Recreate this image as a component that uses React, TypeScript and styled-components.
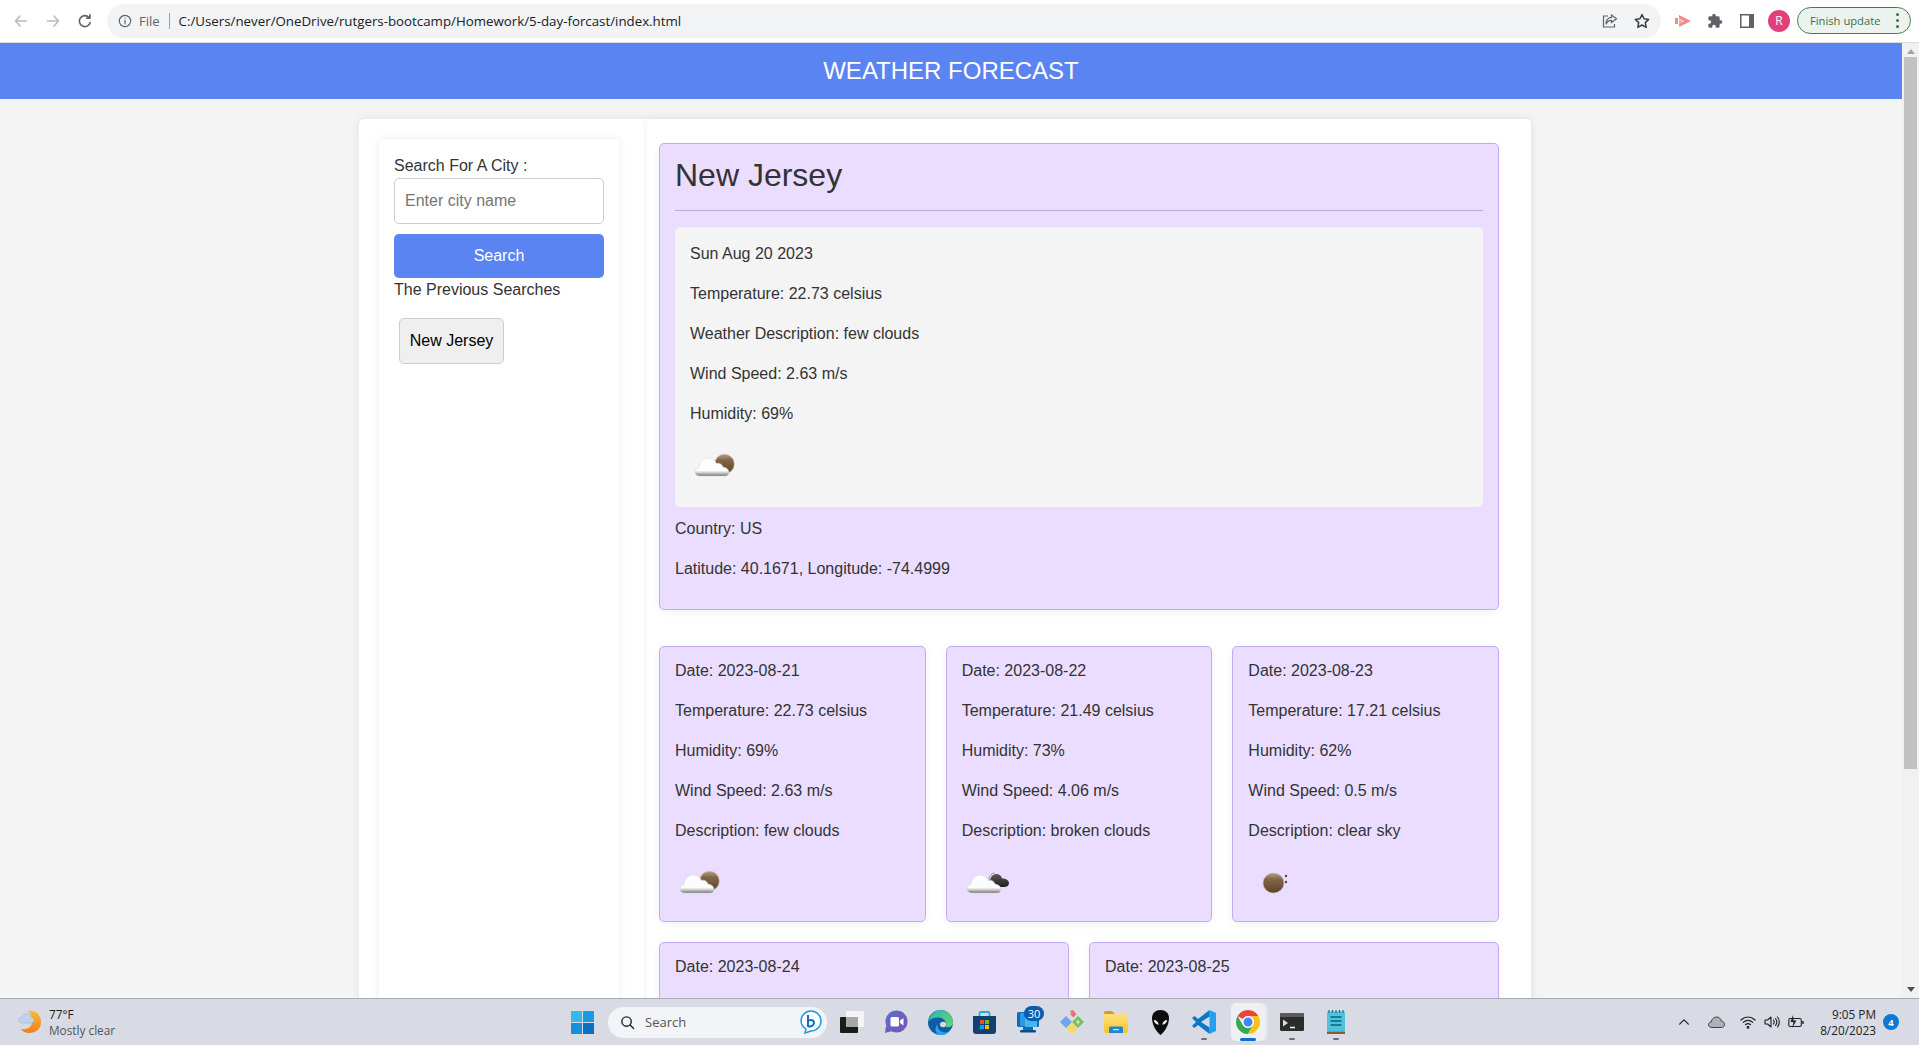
import React from "react";
import styled, { createGlobalStyle } from "styled-components";

const Global = createGlobalStyle`
  html, body { margin: 0; padding: 0; height: 100%; overflow: hidden; }
  body { font-family: "Liberation Sans", Arial, sans-serif; color: #333; }
  * { box-sizing: border-box; }
`;

const Shell = styled.div`display: flex; flex-direction: column; height: 100vh; overflow: hidden; background: #f4f4f4;`;

const Toolbar = styled.div`display: flex; align-items: center; height: 43px; flex: none; background: #fff; padding: 0 8px 1px 5px; border-bottom: 1px solid #dadce0;`;
const NavSlot = styled.div`width: 32px; height: 32px; display: flex; align-items: center; justify-content: center; flex: none;`;
const Omnibox = styled.div`flex: 1; margin-left: 6px; height: 34px; border-radius: 17px; background: #f1f3f4; display: flex; align-items: center; padding: 0 3px 0 11px; font-family: "Open Sans", sans-serif;`;
const FileLabel = styled.span`color: #5f6368; margin-left: 7px; font-size: 13px; padding-right: 9px; border-right: 1px solid #9aa0a6; line-height: 16px;`;
const Url = styled.span`color: #202124; margin-left: 9px; font-size: 13.3px; flex: 1; white-space: nowrap;`;
const ExtGroup = styled.div`display: flex; margin-left: 6px; flex: none;`;
const Avatar = styled.div`width: 22px; height: 22px; border-radius: 50%; background: #e0417c; color: #fff; font: 12px "Open Sans", sans-serif; display: flex; align-items: center; justify-content: center;`;
const UpdatePill = styled.div`margin-left: 2px; width: 114px; height: 27px; flex: none; border-radius: 14px; border: 1px solid #3d7f4a; background: #ecf3ee; display: flex; align-items: center; justify-content: space-between; padding: 0 11px 0 12px; color: #3c6e47; font: 11.2px "Open Sans", sans-serif;`;
const Dots = styled.div`display: flex; flex-direction: column; gap: 3px; span { width: 3px; height: 3px; border-radius: 50%; background: #2b7a3d; display: block; }`;

const Viewport = styled.div`flex: 1; min-height: 0; display: flex;`;
const Page = styled.div`flex: 1; min-width: 0; overflow: hidden; display: flex; flex-direction: column;`;
const Banner = styled.header`height: 56px; flex: none; background: #5a84f2; color: #fff; font-size: 24px; display: flex; align-items: center; justify-content: center;`;
const Container = styled.div`margin: 20px 0 0 359px; width: 1172px; display: flex; background: #fff; border-radius: 5px; box-shadow: 0 0 10px rgba(0,0,0,.07); flex: 1;`;
const Aside = styled.aside`width: 288px; flex: none; padding: 20px 28px 0 20px; display: flex;`;
const SideCard = styled.div`width: 240px; padding: 15px; background: #fff; border-radius: 5px; box-shadow: 0 0 10px rgba(0,0,0,.08); min-height: 900px; font-size: 16px;`;
const SideLabel = styled.div`line-height: 24px; height: 24px;`;
const CityInput = styled.input`display: block; width: 210px; height: 46px; border: 1px solid #ccc; border-radius: 5px; padding: 0 10px; font: 16px "Liberation Sans", Arial, sans-serif; color: #333; &::placeholder { color: #757575; opacity: 1; }`;
const SearchBtn = styled.button`display: block; width: 210px; height: 44px; margin-top: 10px; background: #5a84f2; color: #fff; border: none; border-radius: 5px; font: 16px "Liberation Sans", Arial, sans-serif;`;
const PrevTitle = styled.div`line-height: 24px; height: 22px;`;
const HistoryBtn = styled.button`display: block; margin: 18px 0 0 5px; width: 105px; height: 46px; background: #efefef; color: #000; border: 1px solid #ccc; border-radius: 5px; font: 16px "Liberation Sans", Arial, sans-serif;`;

const Main = styled.main`flex: 1; padding: 24px 32px 0 12px; background: #fff; border-radius: 5px; box-shadow: -2px 0 10px rgba(0,0,0,.05);`;
const CurrentCard = styled.section`height: 467px; background: #eaddff; border: 1px solid #c3a9f2; border-radius: 5px; padding: 0 15px; box-shadow: 0 2px 8px rgba(0,0,0,.06);`;
const CityTitle = styled.h2`margin: 0; font-size: 32px; font-weight: 400; height: 67px; line-height: 62px; border-bottom: 1px solid #b9a8d6;`;
const TodayBox = styled.div`margin-top: 16px; height: 280px; background: #f4f4f4; border-radius: 5px; padding: 15px;`;
const Line = styled.p`margin: 0 0 16px; font-size: 16px; line-height: 24px; white-space: nowrap;`;
const Facts = styled.div`padding-top: 10px;`;
const Forecast = styled.div`display: flex; flex-wrap: wrap; gap: 20px; margin-top: 36px;`;
const DayCard = styled.article`flex: 1 1 260px; height: 276px; background: #eaddff; border: 1px solid #c3a9f2; border-radius: 5px; padding: 12px 15px; box-shadow: 0 2px 8px rgba(0,0,0,.06);`;
const IconSpot = styled.div`width: 50px; height: 50px; margin-top: -2px;`;

const ScrollBar = styled.div`width: 17px; flex: none; background: #f1f1f1; display: flex; flex-direction: column; align-items: center; justify-content: space-between; padding: 6px 0;`;
const Thumb = styled.div`width: 13px; height: 712px; background: #c1c1c1; margin-top: 3px; margin-bottom: auto;`;
const Caret = styled.div<{ $down?: boolean }>`width: 0; height: 0; border-left: 4.5px solid transparent; border-right: 4.5px solid transparent; ${p => p.$down ? "border-top: 5px solid #505050;" : "border-bottom: 5px solid #a3a3a3;"}`;

const Taskbar = styled.footer`height: 47px; flex: none; background: #d8dbe4; border-top: 1px solid #a9acb3; display: flex; align-items: center; font-family: "Open Sans", sans-serif;`;
const WeatherWidget = styled.div`width: 560px; flex: none; padding-left: 18px; display: flex; align-items: center; gap: 7px; font-size: 11.8px; line-height: 16px;`;
const Muted = styled.div`color: #555;`;
const Strong = styled.div`color: #1a1a1a;`;
const StartSlot = styled.div`width: 44px; flex: none; display: flex; justify-content: center;`;
const SearchPill = styled.div`width: 219px; height: 31px; margin: 0 3px 0 4px; flex: none; border-radius: 16px; background: #f3f4f8; display: flex; align-items: center; padding: 0 5px 0 12px; font-size: 13px; color: #555; gap: 10px; span { flex: 1; }`;
const AppSlot = styled.div<{ $active?: boolean }>`
  width: 44px; height: 38px; flex: none; position: relative; display: flex; align-items: center; justify-content: center;
  ${p => p.$active ? `
    &::before { content: ""; position: absolute; left: 5px; top: 0; width: 34px; height: 38px; border-radius: 5px; background: #eff0f4; box-shadow: 3px 0 0 -0.5px #e6e8ee; }
  ` : ""}
  svg { position: relative; }
`;
const RunDot = styled.i<{ $active?: boolean }>`position: absolute; bottom: ${p => p.$active ? "0" : "1px"}; left: 50%; transform: translateX(-50%); height: ${p => p.$active ? "3px" : "2px"}; border-radius: 2px; width: ${p => p.$active ? "16px" : "6px"}; background: ${p => p.$active ? "#0b6fd1" : "#6c6f76"};`;
const CountBadge = styled.b`position: absolute; top: 3px; left: 18px; width: 20px; height: 15px; border-radius: 8px; background: #0a5cb0; color: #fff; font-weight: 400; font-size: 11px; line-height: 15px; text-align: center;`;
const Tray = styled.div`margin-left: auto; display: flex; align-items: center; padding-right: 20px;`;
const TraySlot = styled.div<{ $w: number }>`width: ${p => p.$w}px; display: flex; justify-content: center;`;
const Clock = styled.div`text-align: right; font-size: 11.8px; line-height: 16px; color: #222; width: 64px;`;
const NotifyBadge = styled.div`width: 16px; height: 16px; margin-left: 7px; border-radius: 50%; background: #0a78d4; color: #fff; font-size: 9.5px; font-weight: 700; display: flex; align-items: center; justify-content: center;`;

const Stroke = ({ size = 16, color = "#5f6368", w = 1.6, children }: { size?: number; color?: string; w?: number; children: React.ReactNode }) => (
  <svg width={size} height={size} viewBox="0 0 16 16" fill="none" stroke={color} strokeWidth={w} strokeLinecap="round" strokeLinejoin="round">{children}</svg>
);

const Defs = () => (
  <svg width="0" height="0" style={{ position: "absolute" }}>
    <defs>
      <linearGradient id="cloudG" x1="0" y1="0" x2="0" y2="1">
        <stop offset="0" stopColor="#fff" /><stop offset=".7" stopColor="#fcfcfc" /><stop offset=".84" stopColor="#c4c4c4" /><stop offset="1" stopColor="#6e6e6e" />
      </linearGradient>
      <linearGradient id="sunG" x1="0" y1="0" x2="0" y2="1">
        <stop offset="0" stopColor="#b5a08a" /><stop offset=".3" stopColor="#84674a" /><stop offset="1" stopColor="#5e432b" />
      </linearGradient>
      <linearGradient id="darkG" x1="0" y1="0" x2="0" y2="1">
        <stop offset="0" stopColor="#5a5a5a" /><stop offset="1" stopColor="#1f1f1f" />
      </linearGradient>
      <linearGradient id="moonG" x1="0" y1="0" x2="0" y2="1">
        <stop offset="0" stopColor="#f9b93a" /><stop offset="1" stopColor="#ee7f1c" />
      </linearGradient>
      <linearGradient id="edgeG" x1="0" y1="0" x2="1" y2="1">
        <stop offset="0" stopColor="#2fb5b8" /><stop offset="1" stopColor="#66d86a" />
      </linearGradient>
      <linearGradient id="meetG" x1="0" y1="0" x2="1" y2="1">
        <stop offset="0" stopColor="#5b6fd0" /><stop offset="1" stopColor="#7a52b5" />
      </linearGradient>
      <linearGradient id="folderG" x1="0" y1="0" x2="0" y2="1">
        <stop offset="0" stopColor="#fde07a" /><stop offset="1" stopColor="#f8c330" />
      </linearGradient>
    </defs>
  </svg>
);

const CloudShape = () => (
  <path d="M10 36C7 36 5 34.5 5 32C5 29.5 6.5 28 9 27.5C9.5 22 13 18 18 18C22 18 25 20 26.5 23.5C29 22.5 32 24 33 27C36.5 27.5 39 29.5 39 32.5C39 35 37 36 35 36Z" fill="url(#cloudG)" stroke="#d4d4d4" strokeWidth=".5" />
);

const WeatherIcon = ({ kind }: { kind: "few" | "broken" | "clear" }) => (
  <svg width="50" height="50" viewBox="0 0 50 50">
    {kind === "few" && <>
      <circle cx="34.5" cy="24" r="9.8" fill="url(#sunG)" stroke="#cbbba6" strokeWidth=".6" />
      <CloudShape />
    </>}
    {kind === "broken" && <>
      <path d="M27 22c.6-3.500 3-6 5.500-6" stroke="#8a8a8a" strokeWidth="1" fill="none" />
      <path d="M30 30c-3 0-5-1.500-5-4 0-2 1.500-3.500 3.500-3.800.5-3 3-5.200 5.800-5.200 3 0 5 1.800 5.700 4.300C43.500 21.500 47 23.300 47 26c0 2.700-2.200 4-5 4z" fill="url(#darkG)" />
      <CloudShape />
    </>}
    {kind === "clear" && <>
      <ellipse cx="25.5" cy="26" rx="10.5" ry="10" fill="url(#sunG)" stroke="#cbbba6" strokeWidth=".6" />
      <circle cx="38" cy="19" r="1.2" fill="#5f432a" />
      <circle cx="38" cy="25" r="1.2" fill="#5f432a" />
    </>}
  </svg>
);

const AppIcon = ({ name }: { name: string }) => {
  switch (name) {
    case "task": return <svg width="24" height="22" viewBox="0 0 24 22"><rect x="0" y="6" width="18" height="16" rx="1" fill="#1b1b1b" /><rect x="6" y="0" width="18" height="16" rx="1" fill="#f5f5f6" /><rect x="6" y="6" width="12" height="10" fill="#a8a8a8" /></svg>;
    case "meet": return <svg width="24" height="24" viewBox="0 0 24 24"><circle cx="12.500" cy="11.500" r="11" fill="url(#meetG)" /><path d="M2 16l-1 7 7-2z" fill="#6a5fc0" /><rect x="6.500" y="7" width="8.500" height="9.500" rx="1.500" fill="#fff" /><path d="M16 10.500l3.500-2.500v7.500L16 13z" fill="#fff" /></svg>;
    case "edge": return <svg width="25" height="25" viewBox="0 0 24 24"><circle cx="12" cy="12" r="12" fill="#0d5ea8" /><path d="M.5 11C2 4 7 0 12 0c7 0 12 5.500 12 12 0 4-4 5-6.500 4.500C18 13 17 9 12 7.500 7 6.500 3 8 .5 11z" fill="url(#edgeG)" /><ellipse cx="14.500" cy="14" rx="3" ry="2.600" fill="#d8dbe4" /><path d="M9 14c0 6 6 10 12 6-3 4-7 4.500-10 4-4-1-5-7-2-10z" fill="#2aa4e8" /></svg>;
    case "store": return <svg width="23" height="23" viewBox="0 0 23 23"><path d="M6.500 5V2.500a1.500 1.500 0 0 1 1.500-1.500h7a1.500 1.500 0 0 1 1.500 1.500V5" fill="none" stroke="#24a9e0" strokeWidth="1.800" /><path d="M0 5h23v15a3 3 0 0 1-3 3H3a3 3 0 0 1-3-3z" fill="#14406f" /><rect x="7" y="9" width="4" height="4" fill="#f25022" /><rect x="12" y="9" width="4" height="4" fill="#7fba00" /><rect x="7" y="14" width="4" height="4" fill="#00a4ef" /><rect x="12" y="14" width="4" height="4" fill="#ffb900" /></svg>;
    case "outlook": return <svg width="24" height="22" viewBox="0 0 24 22"><rect x="1" y="1" width="22" height="15" rx="1.500" fill="#0f6cbd" /><rect x="4" y="2" width="16" height="13" fill="#2b9ae0" /><path d="M9 5h12v11H9z" fill="#48b4e8" /><rect x="7" y="16" width="10" height="3" fill="#0f6cbd" /><rect x="4" y="19" width="16" height="2.500" rx="1" fill="#0b4f8a" /></svg>;
    case "gem": return <svg width="24" height="24" viewBox="0 0 24 24"><path d="M10 1l3-1 3.500 4-3 3.500-3.500-3.500 1.500-1z" fill="#e5736b" /><path d="M6 6l6 6-6 6-6-6z" fill="#6ca6ef" /><path d="M18 6l6 6-6 6-6-6z" fill="#79bf5f" /><path d="M16 12h4M18 10v4" stroke="#d9e9cf" strokeWidth="1.200" /><path d="M12 13l6 5.500-6 5.500-6-5.500z" fill="#f4d869" /></svg>;
    case "folder": return <svg width="24" height="22" viewBox="0 0 24 22"><path d="M0 2a2 2 0 0 1 2-2h6l3 3H0z" fill="#d79a1c" /><rect x="0" y="3" width="24" height="19" rx="1.500" fill="url(#folderG)" /><path d="M5 22v-5a1.500 1.500 0 0 1 1.500-1.500h11A1.500 1.500 0 0 1 19 17v5z" fill="#1f86cf" /><rect x="9" y="18" width="6" height="1.200" fill="#cfe6f7" /></svg>;
    case "alien": return <svg width="17" height="25" viewBox="0 0 17 25"><path d="M8.500 0C3.500 0 0 3 0 8c0 7 4.500 14 8.500 17 4-3 8.500-10 8.500-17C17 3 13.500 0 8.500 0z" fill="#0c0c0c" /><path d="M1.800 10c2.500 0 4.500 2 5 4.800C3.800 14.500 2 12.500 1.800 10zM15.200 10c-2.500 0-4.500 2-5 4.800 3-.3 4.800-2.300 5-4.800z" fill="#e9e9e9" /></svg>;
    case "vscode": return <svg width="24" height="24" viewBox="0 0 24 24"><path d="M17.500 0L24 3v18l-6.500 3z" fill="#23a0f0" /><path d="M17.500 0v6.500L9 12l8.500 5.500V24L6 15l-3.500 3L0 16l4-4-4-4 2.500-2L6 9z" fill="#0a78c8" /></svg>;
    case "chrome": return <svg width="24" height="24" viewBox="0 0 24 24"><path d="M12 0a12 12 0 0 1 10.390 6H12a6 6 0 0 0-5.200 3L1.610 6A12 12 0 0 1 12 0z" fill="#e8453c" /><path d="M1.610 6A12 12 0 0 0 12 24l5.200-9a6 6 0 0 1-10.400 0z" fill="#34a853" /><path d="M22.390 6A12 12 0 0 1 12 24l5.200-9A6 6 0 0 0 12 6z" fill="#fbc116" /><circle cx="12" cy="12" r="5.700" fill="#fff" /><circle cx="12" cy="12" r="4.500" fill="#4285f4" /></svg>;
    case "term": return <svg width="24" height="18" viewBox="0 0 24 18"><rect width="24" height="18" rx="1.500" fill="#2c2c2c" /><path d="M0 1.500A1.500 1.500 0 0 1 1.500 0h21A1.500 1.500 0 0 1 24 1.500V4H0z" fill="#5b5b5b" /><path d="M3 6.500l5 3.500-5 3.500" fill="#ddd" /><path d="M10 14.500h5" stroke="#fff" strokeWidth="1.500" /></svg>;
    case "note": return <svg width="18" height="24" viewBox="0 0 18 24"><rect x="0" y="1.500" width="18" height="20" rx="1" fill="#4cc4de" /><rect x="0" y="21.500" width="18" height="2.500" fill="#8a5a2b" /><path d="M2 0v3M5.500 0v3M9 0v3M12.500 0v3M16 0v3" stroke="#1d6f88" strokeWidth="1.200" /><path d="M3.500 7h11M3.500 11h11M3.500 15h11" stroke="#0e5f7a" strokeWidth="1.600" /></svg>;
    default: return null;
  }
};

const apps = ["task", "meet", "edge", "store", "outlook", "gem", "folder", "alien", "vscode", "chrome", "term", "note"];
const running = ["vscode", "term", "note"];

const days = [
  { date: "2023-08-21", t: "22.73", h: "69", w: "2.63", d: "few clouds", i: "few" as const },
  { date: "2023-08-22", t: "21.49", h: "73", w: "4.06", d: "broken clouds", i: "broken" as const },
  { date: "2023-08-23", t: "17.21", h: "62", w: "0.5", d: "clear sky", i: "clear" as const },
];

export default function App() {
  return (
    <Shell>
      <Global />
      <Defs />
      <Toolbar>
        <NavSlot><Stroke color="#b9bbbe"><path d="M13.500 8h-11M7 3L2.500 8 7 13" /></Stroke></NavSlot>
        <NavSlot><Stroke color="#b9bbbe"><path d="M2.500 8h11M9 3l4.500 5L9 13" /></Stroke></NavSlot>
        <NavSlot><Stroke color="#5f6368"><path d="M13.200 9.500A5.500 5.500 0 1 1 12 4.500M13 1.800v3.400H9.600" /></Stroke></NavSlot>
        <Omnibox>
          <Stroke size={14} w={1.3}><circle cx="8" cy="8" r="6.500" /><path d="M8 7.300v4M8 4.600v.2" /></Stroke>
          <FileLabel>File</FileLabel>
          <Url>C:/Users/never/OneDrive/rutgers-bootcamp/Homework/5-day-forcast/index.html</Url>
          <NavSlot><svg width="16" height="16" viewBox="0 0 16 16" fill="none" stroke="#5f6368" strokeWidth="1.200"><path d="M6 3H1.500v11h11v-3" /><path d="M9.500 2l5 3.800-5 3.800V7.400C6.500 7.400 5 9 4 11.200 4 7.500 6 4.600 9.500 4.300z" /></svg></NavSlot>
          <NavSlot><svg width="16" height="16" viewBox="0 0 16 16" fill="none" stroke="#3c4043" strokeWidth="1.500" strokeLinejoin="round"><path d="M8 1.500l2 4.300 4.700.6-3.400 3.200.9 4.700L8 12l-4.200 2.300.9-4.700L1.300 6.400 6 5.800z" /></svg></NavSlot>
        </Omnibox>
        <ExtGroup>
          <NavSlot><svg width="16" height="14" viewBox="0 0 16 14"><path d="M0 4h3v6H0zM4 1l12 6-12 6v-3.500l5-2.500-5-2.500z" fill="#f28b8f" /><path d="M4 5h3v4H4z" fill="#f6b0b2" /></svg></NavSlot>
          <NavSlot><svg width="16" height="16" viewBox="0 0 24 24" fill="#5f6368"><path d="M20.500 11H19V7a2 2 0 0 0-2-2h-4V3.500a2.500 2.500 0 0 0-5 0V5H4a2 2 0 0 0-2 2v3.800h1.500a2.700 2.700 0 0 1 0 5.400H2V20a2 2 0 0 0 2 2h3.800v-1.500a2.700 2.700 0 0 1 5.400 0V22H17a2 2 0 0 0 2-2v-4h1.500a2.500 2.500 0 0 0 0-5z" /></svg></NavSlot>
          <NavSlot><svg width="14" height="14" viewBox="0 0 14 14"><path d="M0 0h14v14H0z" fill="#5f6368" /><path d="M1.500 1.500h7.500v11H1.500z" fill="#fff" /></svg></NavSlot>
          <NavSlot><Avatar>R</Avatar></NavSlot>
        </ExtGroup>
        <UpdatePill>Finish update<Dots><span /><span /><span /></Dots></UpdatePill>
      </Toolbar>

      <Viewport>
        <Page>
          <Banner>WEATHER FORECAST</Banner>
          <Container>
            <Aside>
              <SideCard>
                <SideLabel>Search For A City :</SideLabel>
                <CityInput placeholder="Enter city name" />
                <SearchBtn>Search</SearchBtn>
                <PrevTitle>The Previous Searches</PrevTitle>
                <HistoryBtn>New Jersey</HistoryBtn>
              </SideCard>
            </Aside>
            <Main>
              <CurrentCard>
                <CityTitle>New Jersey</CityTitle>
                <TodayBox>
                  <Line>Sun Aug 20 2023</Line>
                  <Line>Temperature: 22.73 celsius</Line>
                  <Line>Weather Description: few clouds</Line>
                  <Line>Wind Speed: 2.63 m/s</Line>
                  <Line>Humidity: 69%</Line>
                  <IconSpot><WeatherIcon kind="few" /></IconSpot>
                </TodayBox>
                <Facts>
                  <Line>Country: US</Line>
                  <Line>Latitude: 40.1671, Longitude: -74.4999</Line>
                </Facts>
              </CurrentCard>
              <Forecast>
                {days.map(d => (
                  <DayCard key={d.date}>
                    <Line>Date: {d.date}</Line>
                    <Line>Temperature: {d.t} celsius</Line>
                    <Line>Humidity: {d.h}%</Line>
                    <Line>Wind Speed: {d.w} m/s</Line>
                    <Line>Description: {d.d}</Line>
                    <IconSpot><WeatherIcon kind={d.i} /></IconSpot>
                  </DayCard>
                ))}
                <DayCard><Line>Date: 2023-08-24</Line></DayCard>
                <DayCard><Line>Date: 2023-08-25</Line></DayCard>
              </Forecast>
            </Main>
          </Container>
        </Page>
        <ScrollBar>
          <Caret />
          <Thumb />
          <Caret $down />
        </ScrollBar>
      </Viewport>

      <Taskbar>
        <WeatherWidget>
          <svg width="24" height="24" viewBox="0 0 24 24"><path d="M10 1c8-1 13 4 13 11s-5 11-12 11c-4 0-7-2-8-4 8 1 12-3 11-10-.5-3-2-6-4-8z" fill="url(#moonG)" /><path d="M5 13c-3 0-4.500-1.500-4-3.500.3-1.500 1.500-2.300 3-2.300C4.600 5 6.500 3.500 9 3.800c2 .2 3.500 1.500 4 3.400 1.800.2 3 1.300 3 2.900 0 1.800-1.500 2.900-3.500 2.900z" fill="#c3d2ea" stroke="#9db1cf" strokeWidth=".6" /></svg>
          <div><Strong>77°F</Strong><Muted>Mostly clear</Muted></div>
        </WeatherWidget>
        <StartSlot>
          <svg width="23" height="23" viewBox="0 0 23 23"><path d="M0 0h11v11H0z" fill="#35b8f0" /><path d="M12 0h11v11H12z" fill="#1a9ae0" /><path d="M0 12h11v11H0z" fill="#1490dc" /><path d="M12 12h11v11H12z" fill="#0a6fc4" /></svg>
        </StartSlot>
        <SearchPill>
          <Stroke size={15} color="#222" w={1.5}><circle cx="7" cy="7" r="5" /><path d="M11 11l3.500 3.500" /></Stroke>
          <span>Search</span>
          <svg width="22" height="24" viewBox="0 0 22 24" fill="none"><path d="M11 1c5.500 0 10 4.500 10 10s-4.500 10-10 10l-6 2 1-4c-3-2-5-4.500-5-8C1 5.500 5.500 1 11 1z" fill="#fff" stroke="#1a9ae0" strokeWidth="1.500" /><path d="M8 5v11c2 1 6 0 6-3s-3-3.500-5-2.500" stroke="#0a6fc4" strokeWidth="2" /></svg>
        </SearchPill>
        {apps.map(a => (
          <AppSlot key={a} $active={a === "chrome"}>
            <AppIcon name={a} />
            {a === "outlook" && <CountBadge>30</CountBadge>}
            {(a === "chrome" || running.includes(a)) && <RunDot $active={a === "chrome"} />}
          </AppSlot>
        ))}
        <Tray>
          <TraySlot $w={32}><Stroke size={14} color="#222" w={1.4}><path d="M3 10.500L8 5.500l5 5" /></Stroke></TraySlot>
          <TraySlot $w={32}><svg width="17" height="12" viewBox="0 0 17 12"><path d="M4 11.500c-2 0-3.500-1-3.500-2.800C.5 7 2 6 3.200 6c.5-3 2.800-5 5.300-5s4.500 1.700 5 4.200c2 .2 3 1.700 3 3.300 0 1.900-1.500 3-3.300 3z" fill="#aeb1b8" stroke="#333" strokeWidth=".9" /></svg></TraySlot>
          <TraySlot $w={32}><svg width="16" height="14" viewBox="0 0 16 14" fill="none" stroke="#222" strokeWidth="1.200" strokeLinecap="round"><path d="M1 5c4-4 10-4 14 0M3.200 7.400c2.800-2.700 6.800-2.700 9.600 0M5.500 9.700c1.400-1.300 3.600-1.300 5 0" /><circle cx="8" cy="12.400" r=".8" fill="#222" /></svg></TraySlot>
          <TraySlot $w={16}><svg width="16" height="14" viewBox="0 0 16 14" fill="none" stroke="#222" strokeWidth="1.100" strokeLinecap="round" strokeLinejoin="round"><path d="M1 5v4h2.500L7 12V2L3.500 5z" /><path d="M9.500 5c.8 1.200.8 2.800 0 4M11.500 3.500c1.500 2 1.500 5 0 7M13.500 2c2.200 3 2.200 7 0 10" /></svg></TraySlot>
          <TraySlot $w={32}><svg width="16" height="14" viewBox="0 0 16 14" fill="none" stroke="#222" strokeWidth="1.100"><rect x=".8" y="3.500" width="12.500" height="8" rx="1.500" /><path d="M15 6v3" strokeWidth="1.400" /><path d="M5 0L2.500 7h3L4 13l4.500-7.500h-3z" fill="#222" stroke="none" /></svg></TraySlot>
          <Clock><div>9:05 PM</div><div>8/20/2023</div></Clock>
          <NotifyBadge>4</NotifyBadge>
        </Tray>
      </Taskbar>
    </Shell>
  );
}
